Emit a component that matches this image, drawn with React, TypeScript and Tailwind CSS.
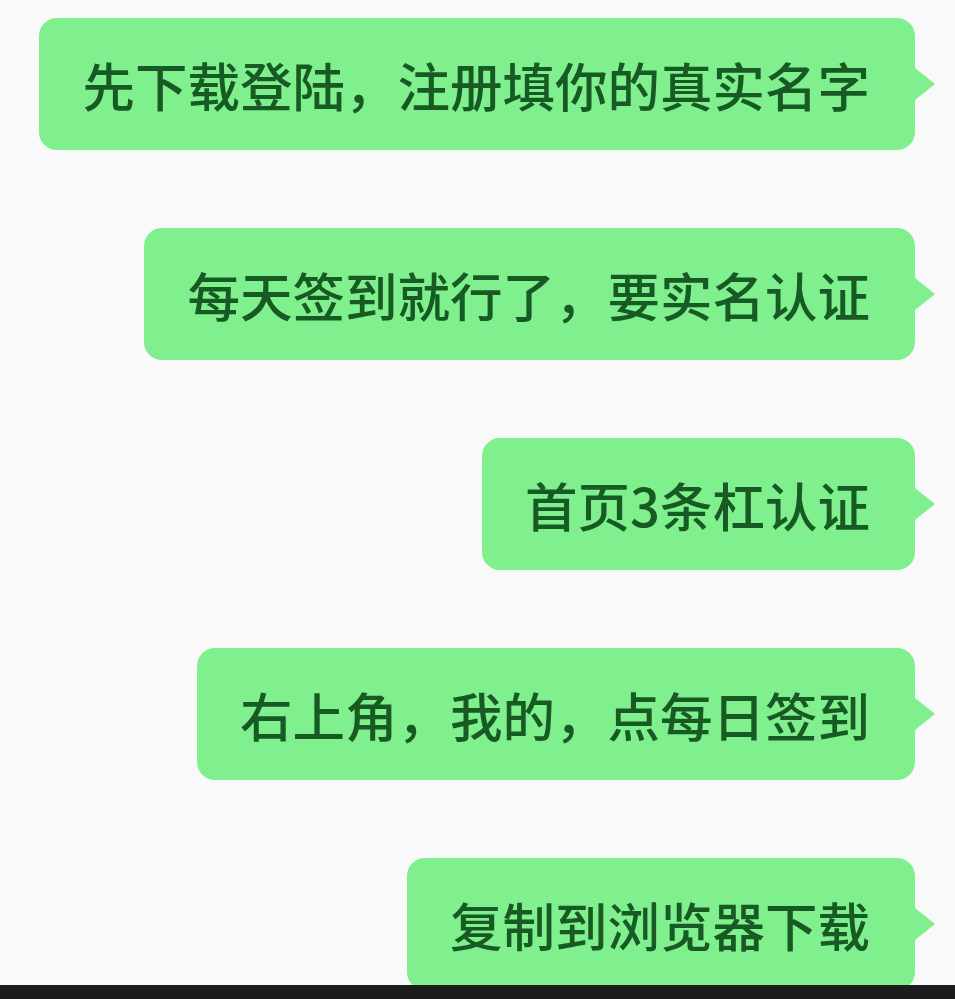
const MESSAGES = [
  "先下载登陆，注册填你的真实名字",
  "每天签到就行了，要实名认证",
  "首页3条杠认证",
  "右上角，我的，点每日签到",
  "复制到浏览器下载",
];

function Bubble({ text }: { text: string }) {
  return (
    <div className="flex items-center justify-end">
      <div className="h-[132px] flex items-center pl-[43px] pr-[45px] rounded-[18px] bg-[#80f08f] text-[#175a23] text-[52.5px] font-medium leading-none whitespace-nowrap">
        {text}
      </div>
      <div className="w-0 h-0 border-y-[16px] border-y-transparent border-l-[20px] border-l-[#80f08f]" />
    </div>
  );
}

export default function App() {
  return (
    <div
      className="h-[999px] w-[955px] overflow-hidden bg-[#f9f9f9] flex flex-col"
      style={{ fontFamily: "'Noto Sans CJK SC', 'Noto Sans', sans-serif" }}
    >
      <div className="flex-1 min-h-0 overflow-hidden flex flex-col gap-[78px] pt-[18px] pr-[20px]">
        {MESSAGES.map((m, i) => (
          <Bubble key={i} text={m} />
        ))}
      </div>
      <div className="h-[14px] bg-[#1c1c1c] flex-shrink-0" />
    </div>
  );
}
